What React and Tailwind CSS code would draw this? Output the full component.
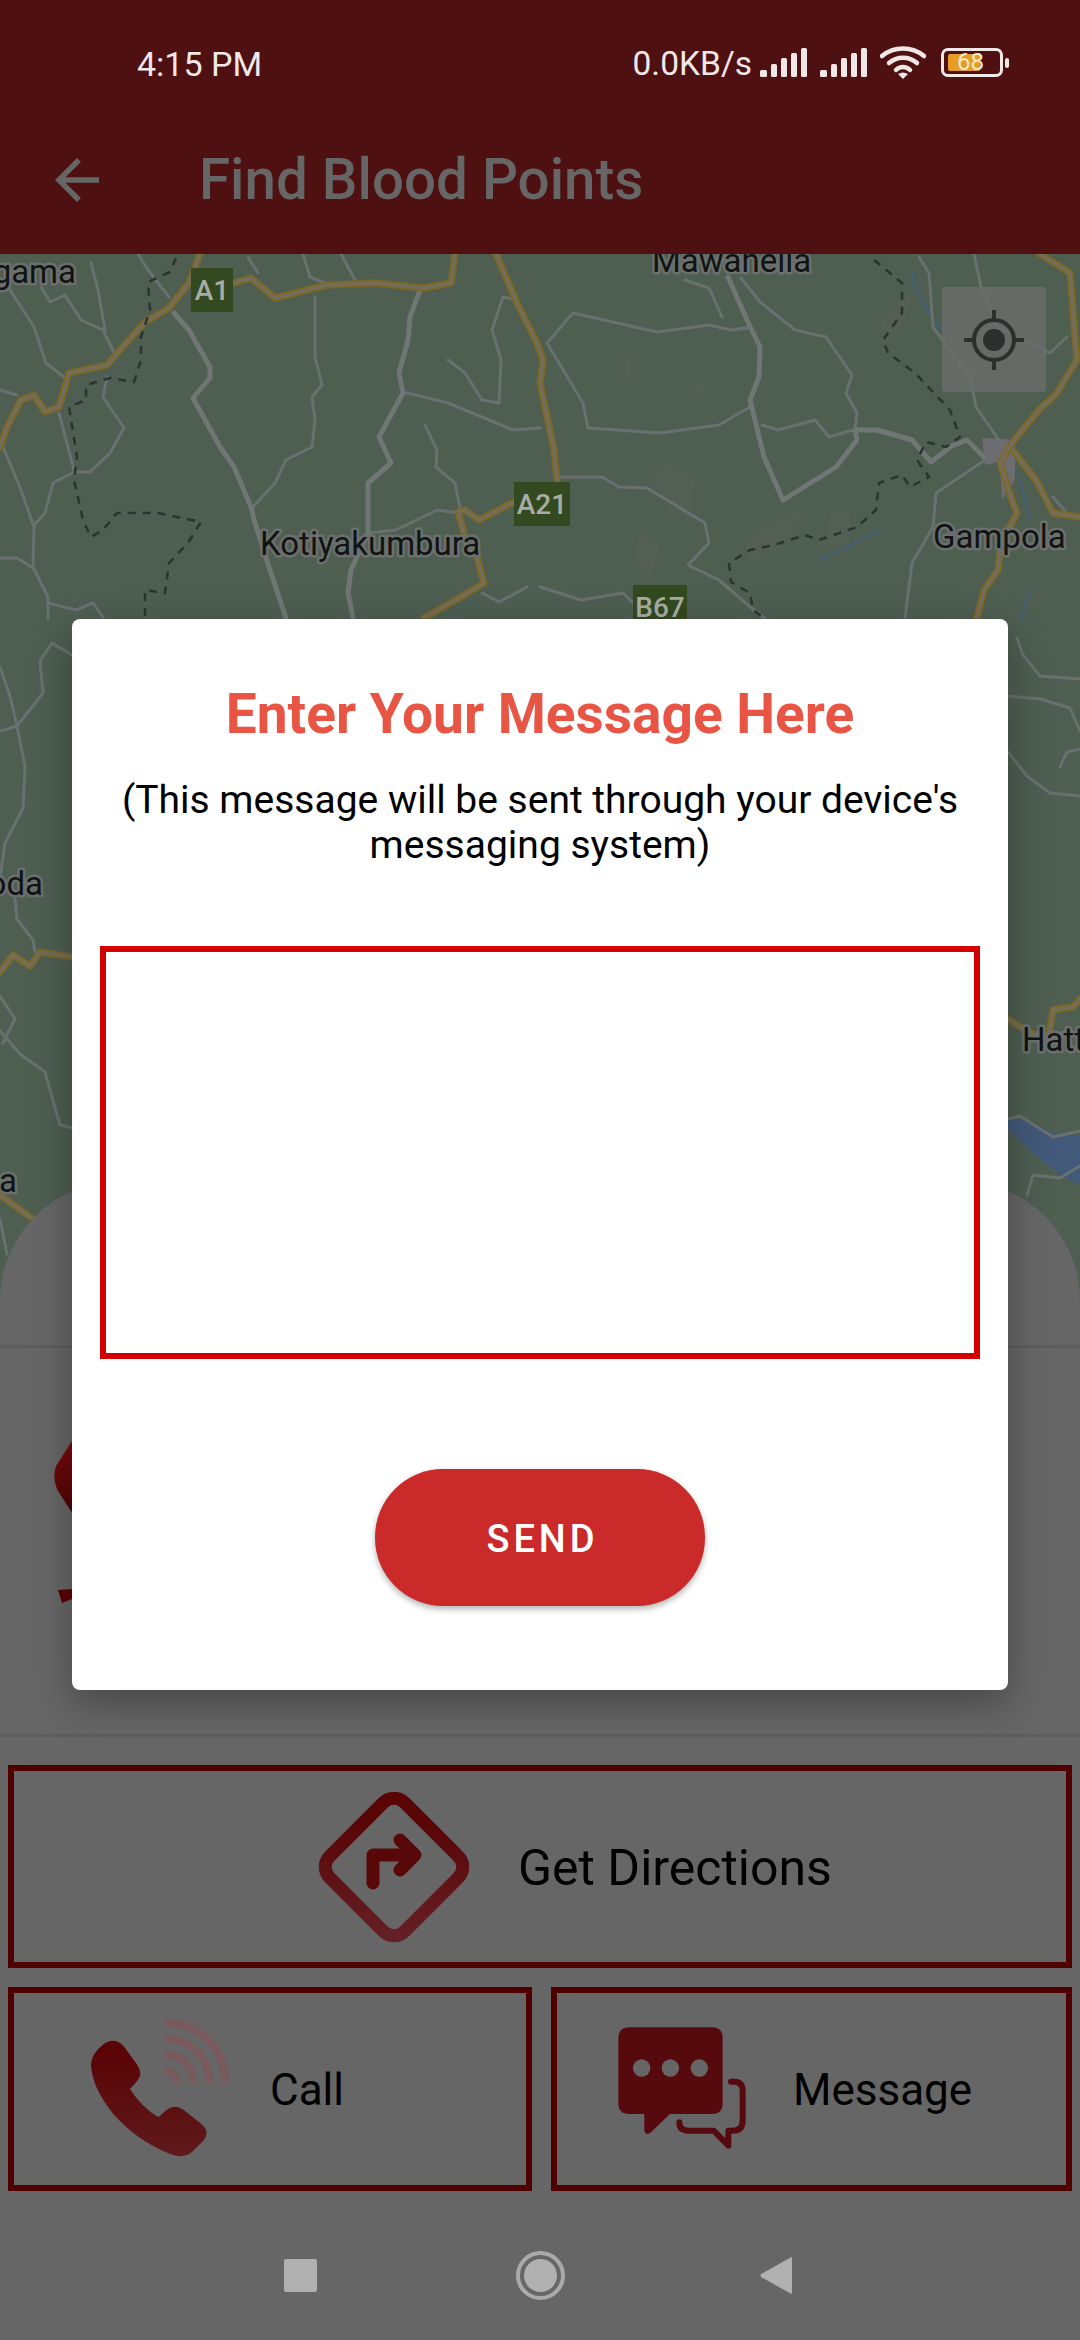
import React from 'react';

const font = { roboto: 'font-["Roboto",sans-serif]' };

// map lines, in page coordinates
const toPath = (pts) => 'M' + pts.map((p) => p.join(' ')).join('L');

const highways = [
  [[0,447],[7,427],[21,400],[34,395],[45,412],[59,407],[69,373],[107,365],[145,322],[169,308],[189,283],[200,254]],
  [[189,283],[234,283],[251,278],[275,298],[327,285],[375,283],[424,288],[451,283],[455,254]],
  [[496,254],[517,303],[537,343],[543,360],[540,383],[554,450],[557,480]],
  [[514,502],[479,520],[465,510],[458,512],[465,537],[475,550],[484,583],[461,597],[424,618]],
  [[1040,254],[1070,273],[1077,360],[1057,393],[1039,410],[1012,443],[1000,463],[1012,500],[1017,513],[1001,543],[998,570],[984,590],[977,618]],
  [[1015,453],[1036,480],[1053,513],[1080,517]],
  [[0,972],[13,955],[30,966],[40,952],[72,957]],
  [[0,1195],[33,1219]],
  [[1008,1019],[1027,1031],[1048,1040],[1053,1010],[1073,1007],[1080,999]],
];

const mainRoads = [
  [[174,313],[189,330],[210,367],[210,378],[193,398],[220,447],[234,467],[251,507],[255,523],[269,567],[286,618]],
  [[420,290],[410,317],[408,340],[399,373],[403,393],[379,437],[391,463],[368,483],[368,533],[351,570],[348,593],[353,618]],
  [[728,277],[747,320],[760,347],[759,377],[750,400],[764,457],[783,500],[836,467],[857,440],[855,430],[877,430],[912,440],[931,462],[950,447],[967,440],[984,457]],
];

const thinRoads = [
  [[315,297],[315,357],[322,385],[312,397],[315,420],[312,447],[286,460],[275,483],[253,507]],
  [[403,392],[448,403],[482,417],[513,430],[540,428]],
  [[448,360],[465,373],[482,400],[499,403],[501,360],[492,330],[503,297],[517,300]],
  [[425,425],[437,450],[436,467],[455,483],[460,508]],
  [[0,390],[17,395]],
  [[10,290],[34,327],[46,363],[65,378]],
  [[41,287],[50,302],[65,295],[81,320],[103,330],[114,353]],
  [[91,263],[98,290],[105,330]],
  [[107,377],[103,397],[124,428],[110,453],[90,472],[74,472],[53,483],[45,513],[34,525],[33,567],[48,597],[48,618]],
  [[59,413],[74,470]],
  [[3,447],[21,490],[34,527]],
  [[0,558],[17,558],[33,568]],
  [[48,603],[76,610],[93,603],[103,617]],
  [[138,254],[148,270],[169,297]],
  [[248,257],[258,273]],
  [[303,254],[310,277],[325,283]],
  [[341,254],[355,280]],
  [[368,533],[396,530],[437,510],[458,513]],
  [[482,593],[499,602],[527,587]],
  [[750,407],[719,425],[660,433],[588,428],[583,403],[547,343],[573,313],[657,332],[709,325],[731,330],[747,328]],
  [[741,278],[760,302],[795,330],[826,337],[852,375],[846,393],[857,413],[855,430]],
  [[762,425],[778,430],[815,420],[829,437],[853,430]],
  [[685,280],[709,288],[722,317]],
  [[557,477],[602,477],[619,487],[647,488],[705,523],[709,543],[688,565],[719,580],[750,607],[764,618]],
  [[540,587],[581,600],[623,593],[633,603]],
  [[919,257],[929,273],[933,327],[970,377],[976,407],[1001,443]],
  [[974,254],[981,287],[998,327],[1050,353],[1067,337]],
  [[988,458],[936,493],[933,527],[912,563],[905,618]],
  [[1053,497],[1067,513]],
  [[0,731],[17,726],[25,767],[23,808],[5,843],[0,878]],
  [[17,726],[43,693],[40,661],[52,643],[72,655]],
  [[0,667],[10,696],[17,726]],
  [[15,899],[17,919],[33,940],[35,952]],
  [[0,1031],[20,1054],[45,1072],[53,1101],[60,1125],[72,1128]],
  [[0,996],[15,1019],[3,1043]],
  [[0,1219],[7,1254]],
  [[1008,696],[1040,699],[1070,708],[1080,731]],
  [[1008,752],[1027,776],[1050,793],[1080,796]],
  [[1017,638],[1023,655],[1040,676],[1080,679]],
  [[1060,767],[1067,752],[1080,749]],
  [[1027,1195],[1033,1175],[1060,1178],[1080,1166]],
  [[1008,1119],[1020,1116],[1053,1137],[1080,1131]],
];

const borders = [
  [[176,258],[170,272],[148,282],[150,310],[141,337],[141,360],[134,382],[110,378],[86,385],[86,400],[69,407],[77,457],[74,480],[83,520],[91,537],[103,530],[117,513],[158,513],[201,522],[188,543],[169,563],[165,593],[145,590],[145,617]],
  [[874,260],[902,283],[902,313],[883,340],[888,353],[915,373],[950,410],[960,437],[946,447],[926,442],[917,460],[929,477],[910,487],[902,475],[879,483],[876,510],[857,527],[819,540],[805,535],[774,545],[750,550],[729,563],[731,582],[750,593],[753,610],[764,618]],
];

const patches = [
  '665,460 695,480 690,520 668,510 650,480',
  '640,530 660,545 650,580 635,560',
  '830,515 850,510 850,545 825,550',
  '745,540 810,505 790,535 750,565',
  '613,368 630,355 632,380',
  '685,395 705,378 700,400',
  '880,320 915,285 905,320 885,345',
  '1000,640 1020,700 1008,720',
];

const labels = [
  { t: 'gama', x: 76, y: 283, a: 'end' },
  { t: 'Mawanella', x: 652, y: 272 },
  { t: 'Kotiyakumbura', x: 260, y: 555 },
  { t: 'Gampola', x: 933, y: 548 },
  { t: 'oda', x: 43, y: 895, a: 'end' },
  { t: 'a', x: 17, y: 1192, a: 'end' },
  { t: 'Hatt', x: 1022, y: 1051 },
];

const signs = [
  { t: 'A1', x: 191, y: 268, w: 42, h: 44 },
  { t: 'A21', x: 514, y: 482, w: 56, h: 44 },
  { t: 'B67', x: 633, y: 585, w: 54, h: 44 },
];

function MapLayer() {
  return (
    <svg className="absolute inset-0 w-[1080px] h-[1100px]" viewBox="0 254 1080 1100" fill="none" strokeLinejoin="round" strokeLinecap="round">
      <rect x="0" y="254" width="1080" height="1100" fill="#4e5e51" />
      {patches.map((p) => <polygon key={p} points={p} fill="#535f53" />)}
      <polygon points="982,438 1015,440 1015,480 1002,500 1000,462 985,465" fill="#6c6c71" />
      <polygon points="1008,1118 1030,1122 1060,1135 1080,1135 1080,1185 1060,1175 1035,1155 1015,1135 1008,1130" fill="#42597a" />
      <path d="M912 273C915 300 935 320 950 340M1020 478L1030 520M880 530L820 560M1030 590L1020 620" stroke="#43607a" strokeWidth="2" />
      {thinRoads.map((r, i) => <path key={i} d={toPath(r)} stroke="#687170" strokeWidth="3" />)}
      {mainRoads.map((r, i) => <path key={i} d={toPath(r)} stroke="#6f7674" strokeWidth="5" />)}
      {highways.map((r, i) => <path key={i} d={toPath(r)} stroke="#7f6822" strokeWidth="7" />)}
      {highways.map((r, i) => <path key={i} d={toPath(r)} stroke="#736d5a" strokeWidth="3.500" />)}
      {borders.map((r, i) => <path key={i} d={toPath(r)} stroke="#2c3431" strokeWidth="2.500" strokeDasharray="8 7" strokeLinecap="butt" />)}
      {signs.map((s) => (
        <g key={s.t}>
          <rect x={s.x} y={s.y} width={s.w} height={s.h} fill="#33491f" />
          <text x={s.x + s.w / 2} y={s.y + 32} textAnchor="middle" fill="#a8aca4" fontFamily="Roboto" fontWeight="500" fontSize="28">{s.t}</text>
        </g>
      ))}
      {labels.map((l) => (
        <text key={l.t} x={l.x} y={l.y} textAnchor={l.a || 'start'} fill="#111413" stroke="#6b706e" strokeWidth="5" paintOrder="stroke" fontFamily="Roboto" fontSize="33">{l.t}</text>
      ))}
    </svg>
  );
}

function SignalBars() {
  return (
    <svg width="47" height="29" viewBox="0 0 47 29" fill="#f0e8e8">
      <rect x="0" y="22" width="7" height="7" rx="1.500" />
      <rect x="11" y="16" width="6" height="13" rx="1.500" />
      <rect x="21" y="10" width="6" height="19" rx="1.500" />
      <rect x="31" y="5" width="6" height="24" rx="1.500" />
      <rect x="41" y="0" width="6" height="29" rx="1.500" />
    </svg>
  );
}

function Wifi() {
  return (
    <svg width="46" height="33" viewBox="0 0 46 33" fill="none" stroke="#f0e8e8" strokeWidth="4.500" strokeLinecap="round">
      <path d="M2 10C14 0 32 0 44 10" />
      <path d="M9 17C17 10 29 10 37 17" />
      <path d="M16 24C20 20 26 20 30 24" />
      <path d="M23 33L18 28Q23 25 28 28Z" fill="#f0e8e8" stroke="none" />
    </svg>
  );
}

function Battery() {
  return (
    <div className="flex items-center gap-[2px]">
      <div className="relative w-[62px] h-[29px] rounded-[7px] border-[3px] border-[#f0e8e8]">
        <div className="absolute left-[4px] top-[3px] w-[32px] h-[17px] rounded-[2px] bg-[#e89b25]" />
        <span className='absolute left-[13px] top-[0px] text-[24px] leading-[23px] text-[#fbeccb] font-["Roboto",sans-serif]'>68</span>
      </div>
      <div className="w-[4px] h-[10px] rounded-[2px] bg-[#f0e8e8]" />
    </div>
  );
}

function DirectionsIcon() {
  return (
    <svg width="152" height="152" viewBox="0 0 152 152" fill="none" strokeLinecap="round" strokeLinejoin="round">
      <defs>
        <linearGradient id="dirGrad" x1="0" y1="0" x2="1" y2="1">
          <stop offset="0.2" stopColor="#590506" />
          <stop offset="1" stopColor="#652126" />
        </linearGradient>
      </defs>
      <rect x="23" y="23" width="106" height="106" rx="15" stroke="url(#dirGrad)" strokeWidth="13" transform="rotate(45 76 76)" />
      <path d="M55 92V64H97M82 49L97 64L82 79" stroke="#590809" strokeWidth="13" />
    </svg>
  );
}

function CallIcon() {
  return (
    <svg width="200" height="180" viewBox="0 0 600 540" fill="none">
      <defs>
        <linearGradient id="phoneGrad" x1="0" y1="0" x2="0" y2="1">
          <stop offset="0.1" stopColor="#5a0406" />
          <stop offset="1" stopColor="#5f1a1c" />
        </linearGradient>
      </defs>
      <path fill="url(#phoneGrad)" d="M125 140Q160 110 190 140L232 198Q250 225 232 245L210 270Q245 325 295 355L320 332Q345 315 370 332L428 378Q450 400 430 425L395 460Q370 480 330 465Q230 425 160 345Q95 265 93 195Q95 165 125 140Z" />
      <g stroke="#785a5c" strokeWidth="24" strokeLinecap="round">
        <path d="M324 72A173 173 0 0 1 495 243" />
        <path d="M324 120A125 125 0 0 1 447 243" />
        <path d="M324 168A76 76 0 0 1 398 243" />
        <path d="M324 215A28 28 0 0 1 350 243" />
      </g>
    </svg>
  );
}

function MessageIcon() {
  return (
    <svg width="200" height="180" viewBox="0 0 600 540" fill="none">
      <path fill="#560a0e" d="M114 85H363Q395 85 395 117V313Q395 345 363 345H237L180 400Q162 412 160 392V345H114Q82 345 82 313V117Q82 85 114 85Z" />
      <circle cx="152" cy="207" r="26" fill="#666666" />
      <circle cx="238" cy="207" r="26" fill="#666666" />
      <circle cx="325" cy="207" r="26" fill="#666666" />
      <path d="M420 248H430Q455 248 455 275V365Q455 395 425 395H412V440L368 395H292Q265 395 265 370" stroke="#560a0e" strokeWidth="18" strokeLinecap="round" strokeLinejoin="round" />
    </svg>
  );
}

function NavBar() {
  return (
    <div className="flex items-center h-[149px] pt-[19px] pl-[284px]">
      <div className="w-[33px] h-[33px] rounded-[2px] bg-[#b0b0b0]" />
      <div className="ml-[199px] w-[49px] h-[49px] rounded-full border-[4px] border-[#aaaaaa] flex items-center justify-center">
        <div className="w-[33px] h-[33px] rounded-full bg-[#b0b0b0]" />
      </div>
      <svg className="ml-[195px]" width="32" height="37" viewBox="0 0 32 37" fill="#b0b0b0">
        <path d="M32 1V36Q32 37.500 30.500 36.500L1 20Q0 18.500 1 17L30.500 .5Q32 -.5 32 1Z" />
      </svg>
    </div>
  );
}

export default function App() {
  return (
    <div className={`relative w-[1080px] h-[2340px] overflow-hidden flex flex-col bg-[#666666] ${font.roboto}`}>
      {/* App bar */}
      <div className="relative z-10 h-[254px] bg-[#4f1011] shrink-0">
        <div className="flex items-center justify-between h-[125px] pl-[137px] pr-[71px]">
          <span className="pt-[3px] text-[34px] text-[#f0e8e8]">4:15 PM</span>
          <div className="flex items-center">
            <span className="pt-[3px] text-[33.500px] text-[#f0e8e8] mr-[8px]">0.0KB/s</span>
            <SignalBars />
            <div className="ml-[13px]"><SignalBars /></div>
            <div className="ml-[13px] mr-[15px]"><Wifi /></div>
            <Battery />
          </div>
        </div>
        <div className="flex items-center h-[60px] mt-[25px] pl-[44px]">
          <svg width="66" height="66" viewBox="0 0 24 24" fill="#666666">
            <path d="M20 11H7.830l5.590-5.590L12 4l-8 8 8 8 1.410-1.410L7.830 13H20v-2z" />
          </svg>
          <span className="ml-[89px] text-[56.500px] font-medium text-[#666666]">Find Blood Points</span>
        </div>
      </div>

      {/* Map + bottom sheet */}
      <div className="relative flex-1 flex flex-col">
        <MapLayer />
        <div className="absolute left-[942px] top-[33px] w-[104px] h-[105px] rounded-[4px] bg-[#6a6c6b]/85 flex items-center justify-center">
          <svg width="60" height="60" viewBox="0 0 60 60" fill="none" stroke="#2b2f2d" strokeWidth="4">
            <circle cx="30" cy="30" r="20" />
            <circle cx="30" cy="30" r="11" fill="#2b2f2d" stroke="none" />
            <path d="M30 0V10M30 50V60M0 30H10M50 30H60" />
          </svg>
        </div>

        <div className="relative mt-[927px] flex-1 flex flex-col rounded-t-[120px] bg-[#666666]">
          <div className="h-[167px] border-b-[3px] border-[#5e5e5e] shrink-0" />
          <div className="h-[389px] border-b-[3px] border-[#5e5e5e] shrink-0 pl-[54px] pt-[93px]">
            <svg width="170" height="170" viewBox="0 0 170 170">
              <defs>
                <linearGradient id="logoGrad" x1="0" y1="0" x2="0" y2="1">
                  <stop offset="0" stopColor="#7a0a0c" />
                  <stop offset="1" stopColor="#4a0303" />
                </linearGradient>
              </defs>
              <path fill="url(#logoGrad)" d="M18 0L2 25Q-2 38 4 50L22 78H150V0Z" />
              <path fill="#5a0204" d="M4 149L18 148V158L8 162Z" />
            </svg>
          </div>
          <div className="flex flex-col gap-[19px] px-[8px] pt-[28px] shrink-0">
            <div className="flex items-center h-[203px] border-[6px] border-[#4f0000] pl-[304px]">
              <DirectionsIcon />
              <span className="ml-[48px] pt-[3px] text-[50px] leading-none text-black">Get Directions</span>
            </div>
            <div className="flex gap-[19px] h-[204px]">
              <div className="flex items-center w-[524px] border-[6px] border-[#4f0000] pl-[46px]">
                <CallIcon />
                <span className="ml-[10px] pt-[2px] text-[44px] leading-none text-black">Call</span>
              </div>
              <div className="flex items-center flex-1 border-[6px] border-[#4f0000] pl-[34px]">
                <MessageIcon />
                <span className="ml-[2px] pt-[2px] text-[44px] leading-none text-black">Message</span>
              </div>
            </div>
          </div>
          <NavBar />
        </div>
      </div>

      {/* Dialog */}
      <div className="absolute z-20 left-[72px] top-[619px] w-[936px] h-[1071px] rounded-[8px] bg-white shadow-[0_14px_40px_rgba(0,0,0,0.3)] flex flex-col items-center pt-[67px]">
        <h2 className="text-[55px] leading-[56px] font-bold text-[#e85545]">Enter Your Message Here</h2>
        <p className="mt-[36px] w-[860px] text-center text-[39px] leading-[45px] text-black">
          (This message will be sent through your device's messaging system)
        </p>
        <textarea className="mt-[78px] w-[880px] h-[413px] shrink-0 resize-none border-[6px] border-[#d40000] bg-white outline-none" />
        <button className="mt-[110px] w-[330px] h-[137px] pt-[4px] pl-[5px] rounded-[68px] bg-[#cb2a2a] shadow-[0_3px_6px_rgba(0,0,0,0.3)] text-[38px] font-medium tracking-[4px] text-white">
          SEND
        </button>
      </div>
    </div>
  );
}
